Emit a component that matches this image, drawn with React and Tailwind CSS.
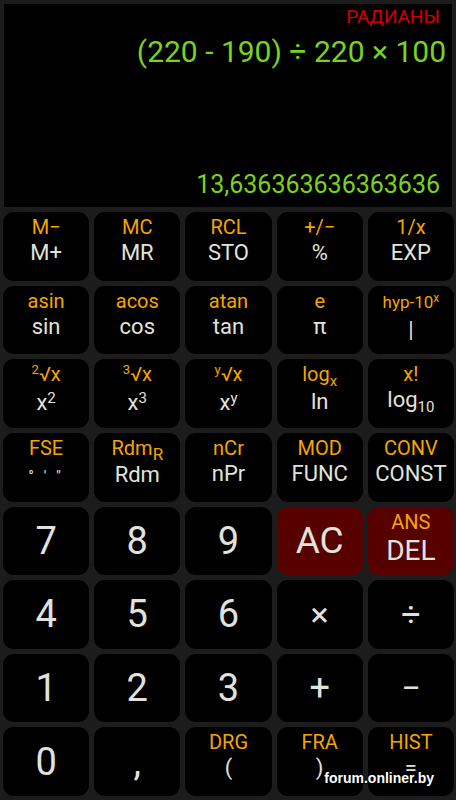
const sup = (t) => <span className="relative -top-[7px] text-[13px]">{t}</span>;
const sub = (t, size = 'text-[15px]') => <span className={`relative top-[5px] ${size}`}>{t}</span>;

const keys = [
  { top: 'M−', main: 'M+' },
  { top: 'MC', main: 'MR' },
  { top: 'RCL', main: 'STO' },
  { top: '+/−', main: '%' },
  { top: '1/x', main: 'EXP' },

  { top: 'asin', main: 'sin' },
  { top: 'acos', main: 'cos' },
  { top: 'atan', main: 'tan' },
  { top: 'e', main: 'π' },
  { top: <span className="text-[17px]">hyp-10<span className="relative -top-[6px] text-[12px]">x</span></span>, main: '|' },

  { top: <>{sup('2')}√x</>, main: <>x<span className="relative -top-[7px] text-[15px]">2</span></> },
  { top: <>{sup('3')}√x</>, main: <>x<span className="relative -top-[7px] text-[15px]">3</span></> },
  { top: <>{sup('y')}√x</>, main: <>x<span className="relative -top-[7px] text-[15px]">y</span></> },
  { top: <>log{sub('x')}</>, main: 'ln' },
  { top: 'x!', main: <>log{sub('10')}</> },

  { top: 'FSE', main: <span className="text-[15px] tracking-[3px]">° ' "</span> },
  { top: <>Rdm{sub('R', 'text-[17px]')}</>, main: 'Rdm' },
  { top: 'nCr', main: 'nPr' },
  { top: 'MOD', main: 'FUNC' },
  { top: 'CONV', main: 'CONST' },

  { digit: '7' },
  { digit: '8' },
  { digit: '9' },
  { digit: 'AC', red: true, size: 'text-[37px]' },
  { top: 'ANS', main: <span className="text-[28px] leading-[30px]">DEL</span>, red: true },

  { digit: '4' },
  { digit: '5' },
  { digit: '6' },
  { digit: '×', size: 'text-[34px]' },
  { digit: '÷', size: 'text-[34px]' },

  { digit: '1' },
  { digit: '2' },
  { digit: '3' },
  { digit: '+', size: 'text-[36px]' },
  { digit: '−', size: 'text-[34px]' },

  { digit: '0' },
  { digit: ',' },
  { top: 'DRG', main: '(' },
  { top: 'FRA', main: ')' },
  { top: 'HIST', main: '=' },
];

function Key({ k }) {
  const bg = k.red ? 'bg-[#560000]' : 'bg-black';
  if (k.digit) {
    return (
      <div className={`${bg} rounded-[11px] flex items-center justify-center text-[#e2e2dc] ${k.size || 'text-[38px]'} leading-none`}>
        {k.digit}
      </div>
    );
  }
  return (
    <div className={`${bg} rounded-[11px] flex flex-col items-center pt-[5px]`}>
      <div className="text-[20px] leading-[20px] text-[#f5a400] whitespace-nowrap">{k.top}</div>
      <div className="mt-[4px] text-[22px] leading-[24px] text-[#e2e2dc] whitespace-nowrap">{k.main}</div>
    </div>
  );
}

export default function App() {
  return (
    <div
      className="relative w-[456px] h-[800px] bg-[#1c1c1c] flex flex-col overflow-hidden"
      style={{ fontFamily: 'Roboto, "Noto Sans", sans-serif' }}
    >
      <div className="mx-[4px] mt-[4px] h-[203px] bg-black flex flex-col items-end pt-[2px] pb-[7px]">
        <div className="pr-[12px] text-[19px] leading-[22px] text-[#d20000]">РАДИАНЫ</div>
        <div className="mt-[6px] pr-[6px] text-[30px] leading-[36px] text-[#78d41a] whitespace-nowrap">
          (220 - 190) ÷ 220 × 100
        </div>
        <div className="mt-auto pr-[12px] text-[25px] leading-[30px] text-[#78d41a]">13,636363636363636</div>
      </div>
      <div className="flex-1 grid grid-cols-5 grid-rows-8 gap-[5px] pl-[3px] pr-[2px] pt-[5px] pb-[4px]">
        {keys.map((k, i) => (
          <Key key={i} k={k} />
        ))}
      </div>
      <div
        className="absolute bottom-[14px] right-[22px] text-[14px] leading-[15px] font-bold text-white"
        style={{ fontFamily: '"Liberation Sans", Arial, sans-serif', textShadow: '0 0 2px #000, 1px 1px 1px #000' }}
      >
        forum.onliner.by
      </div>
    </div>
  );
}
